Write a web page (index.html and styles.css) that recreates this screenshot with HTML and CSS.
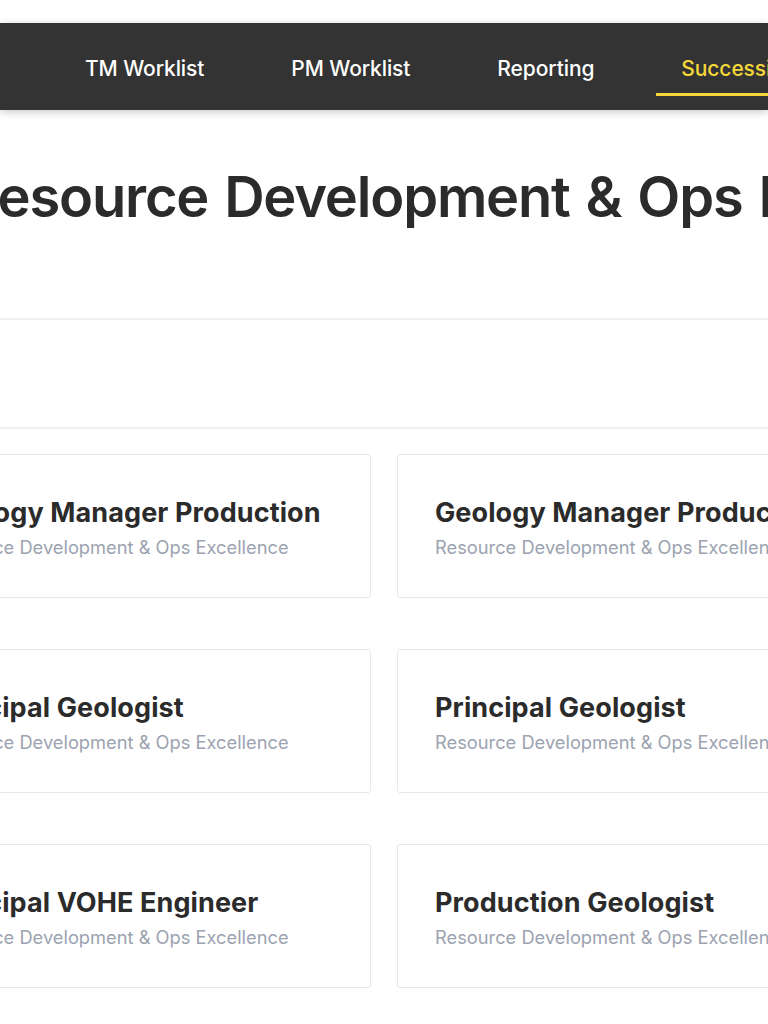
FILE: index.html
```html
<!DOCTYPE html>
<html lang="en">
<head>
<meta charset="utf-8">
<title>Succession - Resource Development &amp; Ops Excellence</title>
<link rel="stylesheet" href="styles.css">
</head>
<body>
<header class="topbar">
  <nav class="nav">
    <a class="nav-item" href="#">TM Worklist</a>
    <a class="nav-item" href="#">PM Worklist</a>
    <a class="nav-item" href="#">Reporting</a>
    <a class="nav-item active" href="#">Succession Planning</a>
  </nav>
</header>
<div class="stage">
  <main class="main">
    <h1 class="page-title">Resource Development &amp; Ops Excellence</h1>
    <section class="filters"></section>
    <section class="cards">
      <article class="card">
        <h2 class="card-title">Geology Manager Production</h2>
        <p class="card-sub">Resource Development &amp; Ops Excellence</p>
      </article>
      <article class="card">
        <h2 class="card-title">Geology Manager Production</h2>
        <p class="card-sub">Resource Development &amp; Ops Excellence</p>
      </article>
      <article class="card">
        <h2 class="card-title">Principal Geologist</h2>
        <p class="card-sub">Resource Development &amp; Ops Excellence</p>
      </article>
      <article class="card">
        <h2 class="card-title">Principal Geologist</h2>
        <p class="card-sub">Resource Development &amp; Ops Excellence</p>
      </article>
      <article class="card">
        <h2 class="card-title">Principal VOHE Engineer</h2>
        <p class="card-sub">Resource Development &amp; Ops Excellence</p>
      </article>
      <article class="card">
        <h2 class="card-title">Production Geologist</h2>
        <p class="card-sub">Resource Development &amp; Ops Excellence</p>
      </article>
    </section>
  </main>
</div>
</body>
</html>
```

FILE: styles.css
```css
html, body {
  margin: 0;
  padding: 0;
  overflow: hidden;
  background: #ffffff;
}

body {
  padding-top: 23px;
  font-family: Inter, "Liberation Sans", Arial, sans-serif;
  color: #2b2b2b;
}

.topbar {
  background: #333333;
  box-shadow: 0 2px 8px rgba(0, 0, 0, 0.22);
  padding: 21px 0 14px 60px;
  position: relative;
  z-index: 1;
}

.nav {
  display: flex;
  gap: 37px;
  white-space: nowrap;
}

.nav-item {
  display: block;
  height: 49px;
  line-height: 49px;
  padding: 0 25px;
  border-bottom: 3px solid transparent;
  color: #ffffff;
  text-decoration: none;
  font-size: 21px;
  font-weight: 500;
  letter-spacing: -0.1px;
}

.nav-item.active {
  color: #f5d73a;
  border-bottom-color: #f5d73a;
}

.stage {
  display: flex;
  justify-content: center;
}

.main {
  flex: 0 0 978px;
  width: 978px;
}

.page-title {
  margin: 52px 0 0 68px;
  font-size: 56px;
  line-height: 70px;
  font-weight: 600;
  letter-spacing: -1.2px;
  word-spacing: 3px;
  white-space: nowrap;
  color: #2b2b2b;
}

.filters {
  margin: 86px -200px 0;
  height: 107px;
  border-top: 2px solid #f0f0f0;
  border-bottom: 2px solid #f0f0f0;
}

.cards {
  margin-top: 25px;
  display: grid;
  grid-template-columns: 476px 476px;
  column-gap: 26px;
  row-gap: 51px;
}

.card {
  border: 1px solid #e8e8e8;
  border-radius: 3px;
  padding: 43px 37px 38px;
  white-space: nowrap;
  overflow: hidden;
}

.card-title {
  margin: 0;
  font-size: 27px;
  line-height: 30px;
  font-weight: 700;
  letter-spacing: 0.1px;
  color: #2b2b2b;
}

.card-sub {
  margin: 7px 0 0;
  font-size: 18.3px;
  line-height: 24px;
  color: #9ca3b0;
}
```
